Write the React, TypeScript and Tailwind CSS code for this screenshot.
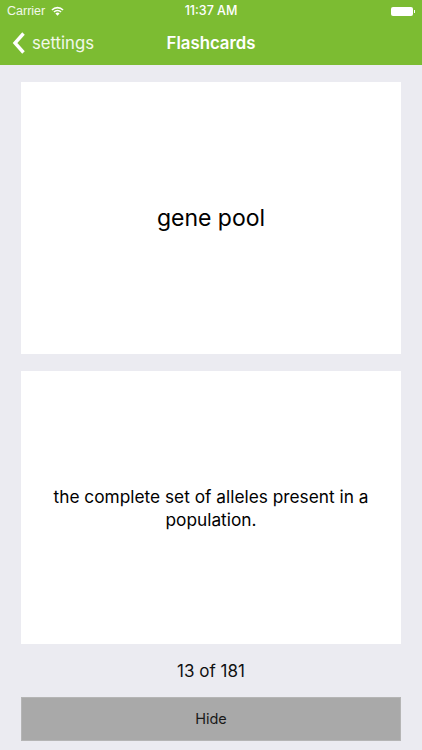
export default function App() {
  return (
    <div className="flex h-[750px] w-[422px] flex-col overflow-hidden bg-[#ebebf1] font-['Inter','Liberation_Sans',sans-serif]">
      <header className="h-[65px] shrink-0 bg-[#7cbc32] text-white">
        <div className="flex h-[22px] items-center text-[12.5px]">
          <div className="flex flex-1 items-center">
            <span className="ml-[7px] font-['Liberation_Sans',sans-serif] text-[12.5px] text-white/90">Carrier</span>
            <svg width="13" height="10" viewBox="0 0 13 10" className="ml-[6px] mt-[-1px]">
              <path d="M.4 3.4a8.6 8.6 0 0 1 12.2 0l-1.1 1.2a7 7 0 0 0-10 0z" fill="#fff" />
              <path d="M2.4 5.5a5.8 5.8 0 0 1 8.2 0l-1.1 1.1a4.2 4.2 0 0 0-6 0z" fill="#fff" />
              <path d="M4.4 7.5a3 3 0 0 1 4.2 0L6.5 9.8z" fill="#fff" />
            </svg>
          </div>
          <span className="mt-[1px] font-medium">11:37 AM</span>
          <div className="flex flex-1 items-center justify-end">
            <div className="h-[9px] w-[22px] rounded-[2px] bg-white" />
            <div className="ml-[1px] mr-[7px] h-[3px] w-[1px] bg-white" />
          </div>
        </div>
        <div className="flex h-[43px] items-center">
          <div className="flex flex-1 items-center">
            <svg width="14" height="22" viewBox="0 0 14 22" fill="none" className="ml-[12px]">
              <path d="M11.5 1.5 3 11l8.5 9.5" stroke="#fff" strokeWidth="3.4" />
            </svg>
            <span className="ml-[6px] mt-[1px] text-[16.7px] text-white/90">settings</span>
          </div>
          <span className="text-[16.8px] font-semibold">Flashcards</span>
          <div className="flex-1" />
        </div>
      </header>
      <main className="flex flex-1 flex-col px-[21px] pt-[17px]">
        <section className="flex h-[272px] shrink-0 items-center justify-center bg-white text-[23px] text-black">
          gene pool
        </section>
        <section className="mt-[17px] flex h-[273px] shrink-0 items-center justify-center bg-white px-[20px] text-center text-[17.3px] leading-[23px] text-black">
          the complete set of alleles present in a population.
        </section>
        <p className="mt-[17px] text-center text-[17px] leading-[20px] text-[#111]">13 of 181</p>
        <button className="mt-[16px] h-[44px] w-full border border-[#b5b5b5] bg-[#a9a9a9] text-[14.5px] text-[#1a1a1a]">
          Hide
        </button>
      </main>
    </div>
  );
}
